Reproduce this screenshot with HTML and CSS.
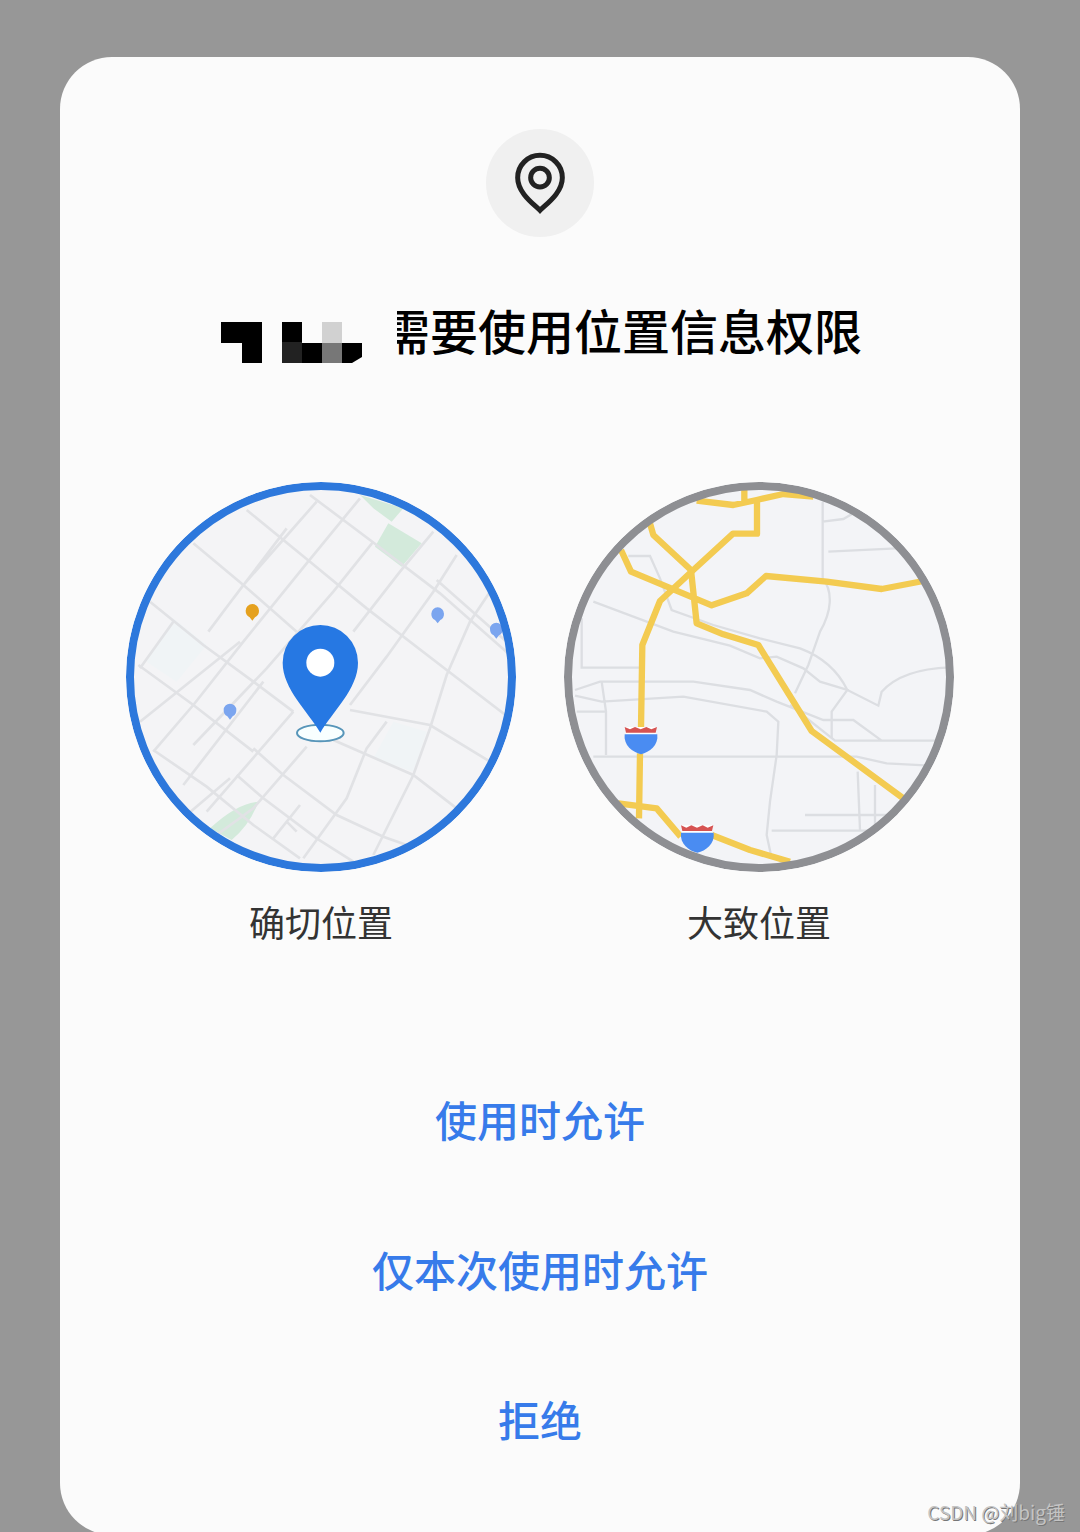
FILE: index.html
```html
<!DOCTYPE html>
<html lang="zh-CN">
<head>
<meta charset="utf-8">
<meta name="viewport" content="width=device-width, initial-scale=1">
<title>位置信息权限</title>
<link rel="stylesheet" href="styles.css">
</head>
<body>
<div class="screen">
<main class="dialog">
  <svg class="badge" viewBox="858 57 324 324" aria-hidden="true">
    <g fill="none" stroke="#222" stroke-width="15">
      <path d="M1020 301C1004 284 953 250 953 203a67 67 0 0 1 134 0C1087 250 1036 284 1020 301Z"/>
      <circle cx="1020" cy="203" r="28"/>
    </g>
  </svg>

  <h1 class="title">
    <svg class="mosaic" viewBox="0 0 142 43" aria-hidden="true">
      <path d="M1 0H42V41H22V21H1ZM62 0H82V21H102V41H62ZM122 21H142V35L132 41H122Z"/>
      <path fill="#222" d="M62 20H82V41H62Z"/>
      <path fill="#d1d1d1" d="M102 0H122V21H102Z"/>
      <path fill="#777" d="M102 21H122V41H102Z"/>
    </svg>
    <span class="title-text">需要使用位置信息权限</span>
  </h1>

  <div class="choices" role="radiogroup" aria-label="位置精度">
    <label class="choice">
      <span class="map">
        <svg viewBox="18 21 1170 1170" aria-hidden="true">
          <path fill="#f4f4f6" d="M0 0H1200V1200H0Z"/>
          <path fill="#f0f4f6" d="M160 430L260 510 170 620 80 560ZM820 740L920 770 880 890 760 850Z"/>
          <path fill="#d3eadb" d="M720 60L850 100 815 140 760 100ZM805 145L905 205 845 275 765 215ZM270 1060Q350 985 415 980 390 1050 335 1095Z"/>
          <g fill="none" stroke="#e1e2e5" stroke-width="8">
            <path d="M570 60L750 195 960 355 1170 540M380 105L570 260 740 400 980 585 1170 730M220 205L370 330 530 470M90 380L250 510 400 620 520 710M55 570L220 690 400 830M100 825L260 935 400 1050 540 1150M350 900L430 970 590 1090 700 1160M400 820L490 900 650 1020 790 1085 860 1110M640 795L880 900 1010 1000M690 705L930 750 1110 860"/>
            <path d="M590 80L370 330 265 470M720 70L560 265 370 500 220 690 100 830M760 200L640 350 440 580 220 810M940 170L840 290 700 470M1010 240L940 350 800 545 690 690M500 160L340 370M160 440L60 580M360 500L60 740M430 620L190 930M520 710L260 1010M560 815L400 1000 290 1080M800 740L740 820 680 970 550 1150M1110 350L1050 440 980 600 930 760 880 900 760 1140M540 990L460 1090M500 1040L530 1070M950 315L1080 430 1160 500M330 910L200 1020"/>
          </g>
          <g fill="#7ba5ef">
            <path id="pin" d="M330 734L322 724C314 720 311 714 311 705a19 19 0 0 1 38 0C349 714 346 720 338 724Z"/>
            <use href="#pin" x="623" y="-289"/>
            <use href="#pin" x="799" y="-243"/>
          </g>
          <path fill="#e5a11f" d="M397 437L389 427C380 422 377 416 377 407a20 20 0 0 1 40 0C417 416 414 422 405 427Z"/>
          <ellipse cx="601" cy="774" rx="70" ry="25" fill="#f8ffff" stroke="#5795b9" stroke-width="6"/>
          <path fill="#2678e3" d="M601 773C565 710 488 642 488 563a113 113 0 0 1 226 0C714 642 637 710 601 773Z"/>
          <circle cx="601" cy="563" r="42" fill="#fff"/>
        </svg>
        <input class="ring" type="radio" name="accuracy" checked>
      </span>
      <span class="caption">确切位置</span>
    </label>

    <label class="choice">
      <span class="map">
        <svg viewBox="12 21 1170 1170" aria-hidden="true">
          <path fill="#f3f4f7" d="M0 0H1200V1200H0Z"/>
          <g fill="none" stroke="#dcdee2" stroke-width="7">
            <path d="M788 80V310C820 350 815 410 780 470L745 570 705 655M788 140L850 132 880 115M805 230L1010 220M205 243H270L300 310 335 405 460 450 600 490 720 520C800 550 840 600 862 645L955 692 965 650C1010 600 1080 580 1170 577M100 380L340 470 510 512 600 550 650 545 730 580 780 620 862 645 815 710V790"/>
            <path d="M65 430V578H245M45 645L120 620H400L570 645 650 680 790 735H880L965 797M45 662L125 680 370 665 620 710 655 740 650 840 630 980 620 1080 635 1150M125 620L138 710V840M50 710H138M100 845H890L980 865 1110 872M690 690L825 797H1140M893 890L900 1065M945 930V1065M735 1020H1020M635 1067H980"/>
          </g>
          <g fill="none" stroke="#f3cb51" stroke-width="19" stroke-linejoin="round">
            <path d="M410 77L520 90 590 75 670 57 760 65M553 45V82M591 75V176H519L400 285 300 378 247 510 243 760M240 835L237 1030"/>
            <path d="M270 145L280 180 393 285 410 445 490 478 595 510 755 768 1030 970M183 225L213 290 455 391 560 355 618 303 800 320 965 342 1090 318M175 985L290 1000 362 1085M455 1080L570 1125 690 1160"/>
          </g>
          <g id="shield">
            <path fill="#fff" d="M194 756H291L287 773 292 782H194L198 773Z"/>
            <path fill="#d65352" d="M194 756L210 763 225 756 242 763 259 756 274 763 291 756 287 773H198Z"/>
            <path fill="#4a8cf2" d="M194 778H292C296 812 268 832 243 838 218 832 190 812 194 778Z"/>
          </g>
          <use href="#shield" x="169" y="295"/>
        </svg>
        <input class="ring" type="radio" name="accuracy">
      </span>
      <span class="caption">大致位置</span>
    </label>
  </div>

  <div class="actions">
    <button class="action" type="button">使用时允许</button>
    <button class="action" type="button">仅本次使用时允许</button>
    <button class="action" type="button">拒绝</button>
  </div>
</main>
<div class="watermark">CSDN @刘big锤</div>
</div>
</body>
</html>
```
FILE: styles.css
```css
* {
  box-sizing: border-box;
}

body {
  margin: 0;
  background: #979797;
  color: #000;
  font-family: "Noto Sans CJK SC", sans-serif;
}

.screen {
  position: relative;
  min-height: 100vh;
  padding: 57px 60px 0;
  overflow: hidden;
}

.dialog {
  display: flex;
  flex-direction: column;
  align-items: center;
  margin-bottom: -3px;
  padding: 72px 24px 41px;
  border-radius: 52px;
  background: #fbfbfb;
}

.badge {
  width: 108px;
  height: 108px;
  border-radius: 50%;
  background: #f0f0f0;
}

.title {
  display: flex;
  align-items: flex-start;
  justify-content: center;
  gap: 20px;
  margin: 60px 0 0;
  padding-left: 2px;
  font-size: 48px;
  font-weight: 500;
  line-height: 64px;
}

.mosaic {
  flex: none;
  width: 142px;
  height: 43px;
  margin-top: 25px;
}

/* The hidden app name also covers the edge of the first character. */
.title-text {
  clip-path: inset(0 0 0 15px);
}

.choices {
  display: flex;
  justify-content: center;
  gap: 48px;
  width: 100%;
  margin-top: 117px;
}

.choice {
  display: flex;
  flex: 0 1 390px;
  flex-direction: column;
  gap: 25px;
  cursor: pointer;
}

.map {
  position: relative;
  display: block;
  aspect-ratio: 1;
  border-radius: 50%;
  overflow: hidden;
}

.map svg {
  display: block;
  width: 100%;
  height: 100%;
}

.ring {
  position: absolute;
  inset: 0;
  width: 100%;
  height: 100%;
  margin: 0;
  appearance: none;
  border: 8px solid #8e8f93;
  border-radius: 50%;
  cursor: pointer;
}

.ring:checked {
  border-color: #2d78dc;
}

.caption {
  color: #333;
  font-size: 36px;
  line-height: 48px;
  text-align: center;
}

.actions {
  display: flex;
  flex-direction: column;
  width: 100%;
  margin-top: 99px;
}

.action {
  height: 150px;
  padding: 0;
  border: 0;
  background: none;
  color: #377bea;
  font: 500 42px/56px "Noto Sans CJK SC", sans-serif;
  cursor: pointer;
}

.watermark {
  position: absolute;
  right: 15px;
  bottom: 6px;
  color: #c4c4c4;
  font-size: 19px;
  line-height: 28px;
  text-shadow: 1px 1px 0 #777;
}
```
